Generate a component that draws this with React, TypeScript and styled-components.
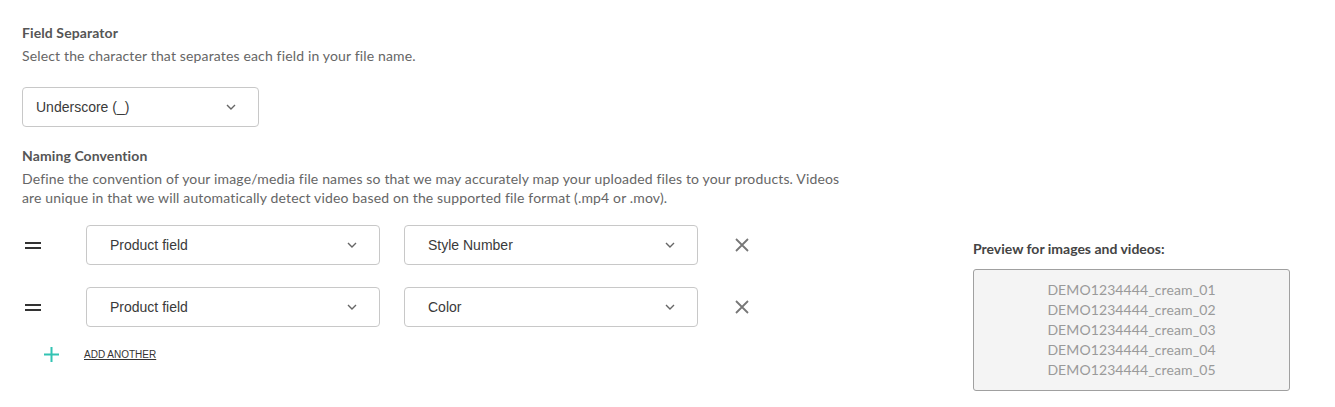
import React from 'react';
import styled, { createGlobalStyle } from 'styled-components';

const GlobalStyle = createGlobalStyle`
  body {
    margin: 0;
    background: #ffffff;
    font-family: Lato, 'Open Sans', sans-serif;
  }
`;

const rows = [
  { field: 'Product field', value: 'Style Number' },
  { field: 'Product field', value: 'Color' },
];

const previewNames = [
  'DEMO1234444_cream_01',
  'DEMO1234444_cream_02',
  'DEMO1234444_cream_03',
  'DEMO1234444_cream_04',
  'DEMO1234444_cream_05',
];

const Chevron = () => (
  <svg width='10' height='6' viewBox='0 0 10 6' fill='none'>
    <path d='M1 1l4 4 4-4' stroke='#666' strokeWidth='1.4' />
  </svg>
);

const Select: React.FC<{ label: string; width: number; inset: number }> = ({ label, width, inset }) => (
  <SelectBox $width={width} $inset={inset}>
    <span>{label}</span>
    <Chevron />
  </SelectBox>
);

const App: React.FC = () => {
  return (
    <Page>
      <GlobalStyle />
      <Title>Field Separator</Title>
      <Description>Select the character that separates each field in your file name.</Description>
      <SeparatorWrap>
        <Select label='Underscore (_)' width={237} inset={14} />
      </SeparatorWrap>

      <Title>Naming Convention</Title>
      <Description>
        Define the convention of your image/media file names so that we may accurately map your uploaded files to
        your products. Videos are unique in that we will automatically detect video based on the supported file
        format (.mp4 or .mov).
      </Description>

      <Columns>
        <RowList>
          {rows.map((row, i) => (
            <FieldRow key={i}>
              <Handle>
                <span />
                <span />
              </Handle>
              <Select label={row.field} width={294} inset={24} />
              <Select label={row.value} width={294} inset={24} />
              <RemoveButton>
                <svg width='14' height='14' viewBox='0 0 14 14'>
                  <path d='M1 1l12 12M13 1L1 13' stroke='#777' strokeWidth='1.8' />
                </svg>
              </RemoveButton>
            </FieldRow>
          ))}
          <AddRow>
            <svg width='15' height='15' viewBox='0 0 15 15'>
              <path d='M7.5 0v15M0 7.5h15' stroke='#33c3b3' strokeWidth='2' />
            </svg>
            <AddLink>ADD ANOTHER</AddLink>
          </AddRow>
        </RowList>

        <Preview>
          <PreviewLabel>Preview for images and videos:</PreviewLabel>
          <PreviewBox>
            {previewNames.map((n) => (
              <div key={n}>{n}</div>
            ))}
          </PreviewBox>
        </Preview>
      </Columns>
    </Page>
  );
};

const Page = styled.div`
  padding: 23px 0 0 22px;
`;

const Title = styled.h3`
  margin: 0;
  font-size: 14px;
  line-height: 19px;
  font-weight: 700;
  letter-spacing: 0.1px;
  color: #555;
`;

const Description = styled.p`
  margin: 4px 0 0;
  max-width: 820px;
  font-size: 14px;
  line-height: 19px;
  letter-spacing: 0.15px;
  color: #666;
`;

const SeparatorWrap = styled.div`
  margin: 22px 0 19px;
`;

const SelectBox = styled.div<{ $width: number; $inset: number }>`
  box-sizing: border-box;
  width: ${(p) => p.$width}px;
  height: 40px;
  display: flex;
  align-items: center;
  justify-content: space-between;
  padding: 0 22px 0 ${(p) => p.$inset - 1}px;
  border: 1px solid #c8c8c8;
  border-radius: 4px;
  background: #fff;
  font-family: 'Liberation Sans', Arial, sans-serif;
  font-size: 14px;
  color: #3a3a3a;
`;

const Columns = styled.div`
  display: grid;
  grid-template-columns: 951px 317px;
  margin-top: 18px;
`;

const RowList = styled.div`
  display: flex;
  flex-direction: column;
  gap: 22px;
`;

const FieldRow = styled.div`
  display: flex;
  align-items: center;
  gap: 24px;
`;

const Handle = styled.div`
  box-sizing: border-box;
  width: 40px;
  display: flex;
  flex-direction: column;
  gap: 3px;
  padding-left: 3px;

  span {
    display: block;
    width: 16px;
    height: 2px;
    background: #333;
  }
`;

const RemoveButton = styled.button`
  margin-left: 13px;
  padding: 0;
  border: 0;
  background: none;
  display: flex;
  cursor: pointer;
`;

const AddRow = styled.div`
  display: flex;
  align-items: center;
  gap: 25px;
  padding-left: 22px;
  margin-top: -2px;
`;

const AddLink = styled.a`
  font-family: 'Liberation Sans', Arial, sans-serif;
  font-size: 10px;
  color: #333;
  text-decoration: underline;
  cursor: pointer;
`;

const Preview = styled.div`
  padding-top: 15px;
`;

const PreviewLabel = styled.div`
  font-size: 14px;
  line-height: 18px;
  font-weight: 700;
  color: #444;
  margin-bottom: 11px;
`;

const PreviewBox = styled.div`
  padding: 10px 0;
  border: 1px solid #a0a0a0;
  border-radius: 3px;
  background: #f4f4f4;
  text-align: center;
  font-size: 14px;
  line-height: 20px;
  letter-spacing: 0.1px;
  color: #9a9a9a;
`;

export default App;
